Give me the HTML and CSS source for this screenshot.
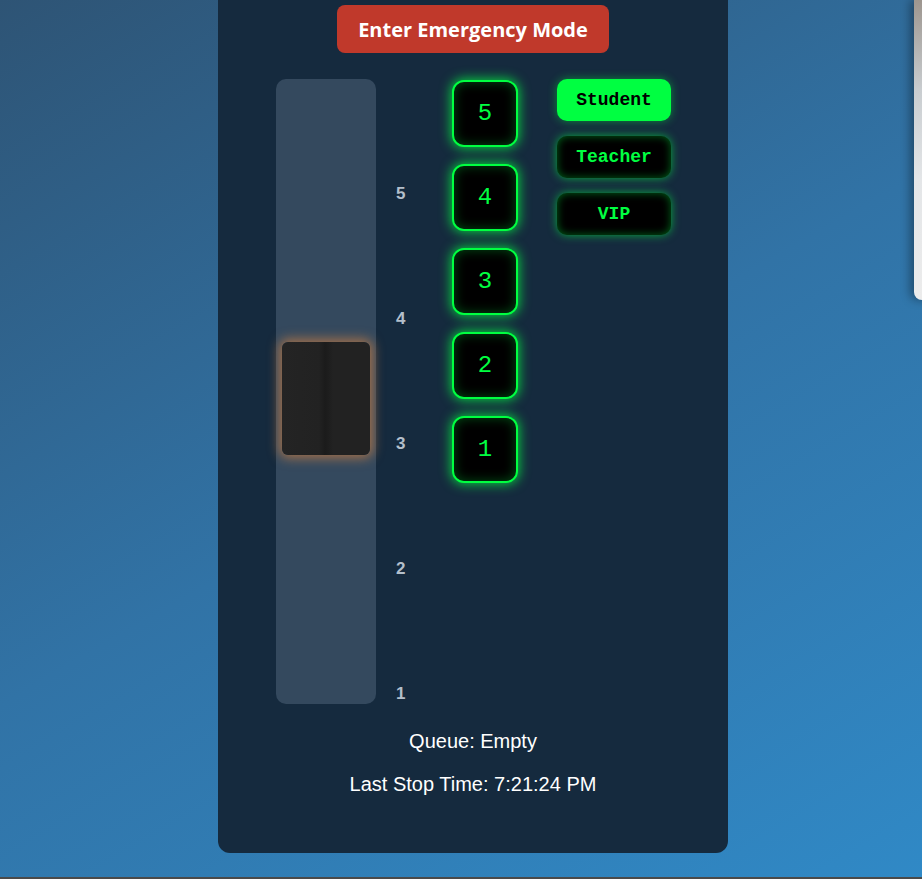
FILE: index.html
```html
<!DOCTYPE html>
<html>
<head>
<meta charset="utf-8">
<link rel="stylesheet" href="styles.css">
</head>
<body>
<div class="page">
  <div class="panel">
    <button class="emergency">Enter Emergency Mode</button>
    <div class="elevator">
      <div class="shaft">
        <div class="cab"></div>
      </div>
      <div class="labels">
        <div class="label">5</div>
        <div class="label">4</div>
        <div class="label">3</div>
        <div class="label">2</div>
        <div class="label">1</div>
      </div>
      <div class="floors">
        <button class="floor">5</button>
        <button class="floor">4</button>
        <button class="floor">3</button>
        <button class="floor">2</button>
        <button class="floor">1</button>
      </div>
      <div class="users">
        <button class="user active">Student</button>
        <button class="user">Teacher</button>
        <button class="user">VIP</button>
      </div>
    </div>
    <p class="info queue">Queue: Empty</p>
    <p class="info">Last Stop Time: 7:21:24 PM</p>
  </div>
  <div class="side"></div>
</div>
<div class="bottom-line"></div>
</body>
</html>
```
FILE: styles.css
```css
html, body {
  margin: 0;
  padding: 0;
  height: 100%;
  overflow: hidden;
}
body {
  background: linear-gradient(150deg, #2e5475 0%, #3173a6 50%, #3089c6 100%);
  font-family: "Liberation Sans", Arial, sans-serif;
}
.page {
  display: flex;
  align-items: flex-start;
  padding-left: 218px;
}
.panel {
  width: 510px;
  flex-shrink: 0;
  margin-top: -20px;
  padding: 25px 0 57px;
  background: #152a3e;
  border-radius: 0 0 12px 12px;
  display: flex;
  flex-direction: column;
  align-items: center;
}
.emergency {
  width: 272px;
  height: 48px;
  border: none;
  border-radius: 8px;
  background: #c0392b;
  color: #fff;
  font-family: "Open Sans", "DejaVu Sans", sans-serif;
  font-weight: bold;
  font-size: 20px;
  line-height: 44px;
  padding: 3px 0 1px;
  margin: 0;
}
.elevator {
  display: flex;
  align-items: flex-start;
  margin-top: 26px;
  margin-left: 1px;
}
.shaft {
  position: relative;
  width: 100px;
  height: 625px;
  flex-shrink: 0;
  background: #34495e;
  border-radius: 10px;
}
.cab {
  position: absolute;
  left: 6px;
  bottom: 249px;
  width: 88px;
  height: 113px;
  border-radius: 6px;
  background: linear-gradient(to right, #242424 0%, #222 42%, #1b1b1b 49%, #1d1d1d 52%, #222 58%, #222 100%);
  box-shadow: 0 0 12px 3px rgba(240, 140, 60, 0.6);
}
.labels {
  margin-left: 20px;
  width: 30px;
  flex-shrink: 0;
  display: flex;
  flex-direction: column;
}
.label {
  height: 125px;
  display: flex;
  align-items: flex-end;
  line-height: 20px;
  font-size: 17px;
  font-weight: bold;
  color: #b3bfcb;
}
.floors {
  margin-left: 26px;
  display: flex;
  flex-direction: column;
  gap: 17px;
  padding-top: 1px;
}
.floor {
  width: 66px;
  height: 67px;
  box-sizing: border-box;
  border: 2px solid #00ff41;
  border-radius: 12px;
  background: #000;
  color: #00ff41;
  font-family: "Liberation Mono", "Courier New", monospace;
  font-size: 24px;
  padding: 0;
  margin: 0;
  box-shadow: 0 0 12px 1px rgba(0, 255, 65, 0.8), inset 0 0 12px rgba(0, 255, 65, 0.3);
}
.users {
  margin-left: 39px;
  display: flex;
  flex-direction: column;
  gap: 15px;
}
.user {
  width: 114px;
  height: 42px;
  border: none;
  border-radius: 10px;
  background: #000;
  color: #00ff41;
  font-family: "Liberation Mono", "Courier New", monospace;
  font-weight: bold;
  font-size: 18px;
  padding: 0;
  margin: 0;
  box-shadow: 0 0 10px rgba(0, 255, 65, 0.6), inset 0 0 8px rgba(0, 255, 65, 0.4);
}
.user.active {
  background: #00ff41;
  color: #000;
  box-shadow: 0 0 10px rgba(0, 255, 65, 0.45);
}
.info {
  margin: 0;
  color: #fff;
  font-size: 20px;
  line-height: 23px;
}
.queue {
  margin-top: 26px;
  margin-bottom: 20px;
}
.side {
  margin-left: 186px;
  width: 40px;
  height: 300px;
  flex-shrink: 0;
  border-radius: 0 0 0 8px;
  background: linear-gradient(to bottom, #9d968f 0%, #c9cdd0 30%, #e4e6e8 60%, #ececec 100%);
  box-shadow: -4px 0 10px rgba(0, 0, 0, 0.35);
}
.bottom-line {
  position: fixed;
  left: 0;
  right: 0;
  bottom: 0;
  height: 2px;
  background: #4a4a4a;
}
```
